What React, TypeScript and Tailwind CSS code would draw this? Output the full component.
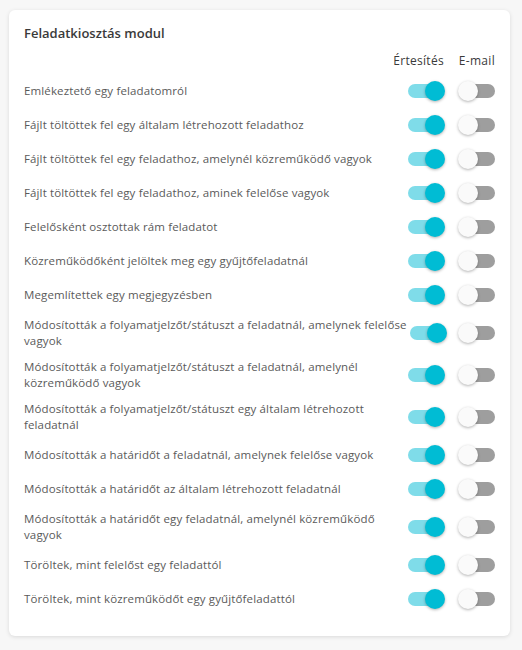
import React from "react";

type Row = { lines: string[] };

const rows: Row[] = [
  { lines: ["Emlékeztető egy feladatomról"] },
  { lines: ["Fájlt töltöttek fel egy általam létrehozott feladathoz"] },
  { lines: ["Fájlt töltöttek fel egy feladathoz, amelynél közreműködő vagyok"] },
  { lines: ["Fájlt töltöttek fel egy feladathoz, aminek felelőse vagyok"] },
  { lines: ["Felelősként osztottak rám feladatot"] },
  { lines: ["Közreműködőként jelöltek meg egy gyűjtőfeladatnál"] },
  { lines: ["Megemlítettek egy megjegyzésben"] },
  { lines: ["Módosították a folyamatjelzőt/státuszt a feladatnál, amelynek felelőse", "vagyok"] },
  { lines: ["Módosították a folyamatjelzőt/státuszt a feladatnál, amelynél", "közreműködő vagyok"] },
  { lines: ["Módosították a folyamatjelzőt/státuszt egy általam létrehozott", "feladatnál"] },
  { lines: ["Módosították a határidőt a feladatnál, amelynek felelőse vagyok"] },
  { lines: ["Módosították a határidőt az általam létrehozott feladatnál"] },
  { lines: ["Módosították a határidőt egy feladatnál, amelynél közreműködő", "vagyok"] },
  { lines: ["Töröltek, mint felelőst egy feladattól"] },
  { lines: ["Töröltek, mint közreműködőt egy gyűjtőfeladattól"] },
];

function Switch({ on }: { on: boolean }) {
  return (
    <div className="relative w-[40px] h-[24px] flex items-center">
      <div
        className={
          "absolute top-[5px] h-[14px] w-[34px] rounded-full " +
          (on ? "left-[3px] bg-[#7fdce9]" : "left-[3px] bg-[#9e9e9e]")
        }
      />
      <div
        className={
          "absolute top-[2px] h-[20px] w-[20px] rounded-full shadow-[0_1px_3px_rgba(0,0,0,0.3)] " +
          (on ? "left-[20px] bg-[#00bcd4]" : "left-0 bg-[#fafafa]")
        }
      />
    </div>
  );
}

export default function App() {
  return (
    <div
      className="min-h-[650px] w-[522px] bg-[#f7f7f7] pt-[10px] pl-[9px]"
      style={{ fontFamily: '"Open Sans", "Liberation Sans", sans-serif' }}
    >
      <div className="w-[501px] rounded-[6px] bg-white shadow-[0_1px_4px_rgba(0,0,0,0.12)] px-[15px] pt-[13px] pb-[20px]">
        <div className="text-[13px] leading-[20px] font-semibold text-[#3a3a3a]">
          Feladatkiosztás modul
        </div>
        <div className="mt-[10px] mb-[5px] flex h-[16px] items-center text-[12px] leading-[16px] font-medium text-[#3a3a3a]">
          <div className="flex-1" />
          <div className="w-[39px] flex justify-end whitespace-nowrap tracking-[0.3px]">Értesítés</div>
          <div className="w-[51px] flex justify-end whitespace-nowrap tracking-[0.3px]">E-mail</div>
        </div>
        {rows.map((r, i) => (
          <div key={i} className="flex items-center py-[5px]">
            <div className="flex-1 min-h-[24px] flex items-center text-[11.5px] leading-[16px] tracking-[0.13px] text-[#5a5a5a]">
              <div className="whitespace-nowrap">
                {r.lines.map((l, j) => (
                  <div key={j}>{l}</div>
                ))}
              </div>
            </div>
            <div className="w-[39px] flex justify-end">
              <Switch on={true} />
            </div>
            <div className="w-[51px] flex justify-end">
              <div className="mr-[-3px]">
                <Switch on={false} />
              </div>
            </div>
          </div>
        ))}
      </div>
    </div>
  );
}
